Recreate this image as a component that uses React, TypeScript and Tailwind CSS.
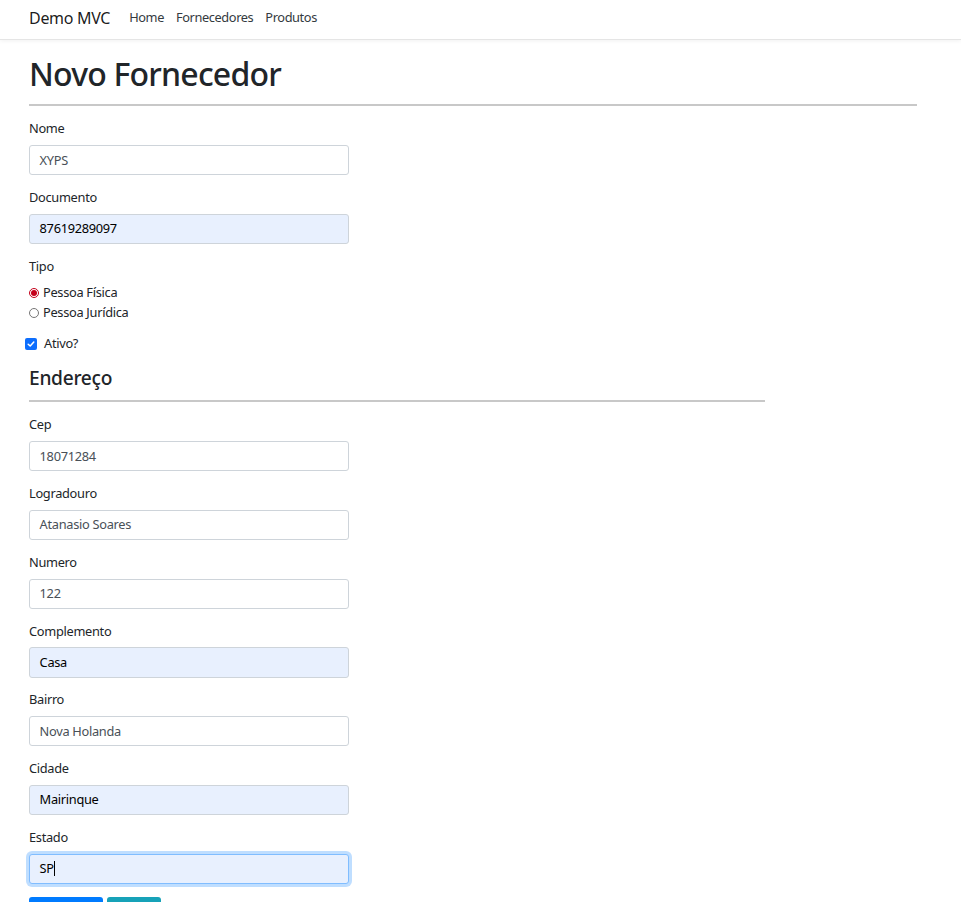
import React from 'react';

const font = { fontFamily: '"Noto Sans", "Open Sans", sans-serif' };

type Field = { label: string; value: string; autofill?: boolean; focused?: boolean };

const top: Field[] = [
  { label: 'Nome', value: 'XYPS' },
  { label: 'Documento', value: '87619289097', autofill: true },
];

const endereco: Field[] = [
  { label: 'Cep', value: '18071284' },
  { label: 'Logradouro', value: 'Atanasio Soares' },
  { label: 'Numero', value: '122' },
  { label: 'Complemento', value: 'Casa', autofill: true },
  { label: 'Bairro', value: 'Nova Holanda' },
  { label: 'Cidade', value: 'Mairinque', autofill: true },
  { label: 'Estado', value: 'SP', autofill: true, focused: true },
];

const FormGroup: React.FC<{ f: Field }> = ({ f }) => (
  <div className="mb-[12.8px]">
    <label className="block text-[12.8px] leading-[19.2px] mb-[6.4px] text-[#212529] tracking-[-0.3px]">{f.label}</label>
    <div
      className={
        'w-[320px] h-[30.4px] rounded-[3px] border px-[9.6px] flex items-center text-[12.8px] tracking-[-0.3px] ' +
        (f.autofill ? 'bg-[#e8f0fe] text-black ' : 'bg-white text-[#495057] ') +
        (f.focused ? 'border-[#80bdff] shadow-[0_0_0_3px_rgba(0,123,255,0.25)]' : 'border-[#ced4da]')
      }
    >
      {f.value}
      {f.focused && <span className="w-px h-[15px] bg-black" />}
    </div>
  </div>
);

export default function App() {
  return (
    <div className="min-h-screen bg-white text-[#212529] overflow-hidden" style={font}>
      {/* Navbar */}
      <nav className="h-[40px] pb-[4px] border-b border-[#e5e5e5] shadow-[0_1px_4px_rgba(0,0,0,0.06)] flex items-center px-[29px]">
        <span className="text-[16px] text-black/90 mr-[19px] tracking-[-0.3px]">Demo MVC</span>
        <div className="flex gap-[12px] text-[12.8px] text-[#343a40] tracking-[-0.4px]">
          <span>Home</span>
          <span>Fornecedores</span>
          <span>Produtos</span>
        </div>
      </nav>

      <main className="px-[29px]">
        <h1 className="text-[32px] leading-[38.4px] font-medium mt-[15px] tracking-[-0.8px]">Novo Fornecedor</h1>
        <hr className="w-[888px] border-0 border-t-2 border-[#c8c8c8] mt-[11px] mb-[13px]" />

        {top.map((f) => (
          <FormGroup key={f.label} f={f} />
        ))}

        <div className="mb-[12.8px] text-[12.8px] tracking-[-0.3px]">
          <label className="block leading-[19.2px] mb-[6.4px]">Tipo</label>
          <div className="flex items-center h-[20px] gap-[4px]">
            <span className="w-[10px] h-[10px] rounded-full border border-[#c4001a] flex items-center justify-center">
              <span className="w-[6px] h-[6px] rounded-full bg-[#c4001a]" />
            </span>
            Pessoa Física
          </div>
          <div className="flex items-center h-[20px] gap-[4px]">
            <span className="w-[10px] h-[10px] rounded-full border border-[#767676]" />
            Pessoa Jurídica
          </div>
        </div>

        <div className="flex items-center h-[17px] -ml-[4px] gap-[7px] text-[12.8px] tracking-[-0.3px]">
          <span className="w-[12px] h-[12px] rounded-[2px] bg-[#0d6efd] flex items-center justify-center">
            <svg width="8" height="8" viewBox="0 0 8 8" fill="none">
              <path d="M1.2 4.2 L3.2 6 L6.8 2" stroke="white" strokeWidth="1.5" strokeLinecap="round" strokeLinejoin="round" />
            </svg>
          </span>
          Ativo?
        </div>

        <h4 className="text-[19.2px] leading-[23px] font-medium mt-[14px] tracking-[-0.3px]">Endereço</h4>
        <hr className="w-[736px] border-0 border-t-2 border-[#c8c8c8] mt-[11px] mb-[13px]" />

        {endereco.map((f) => (
          <FormGroup key={f.label} f={f} />
        ))}

        <div className="flex gap-[4px]">
          <button aria-label="Salvar" className="w-[74px] h-[30.4px] rounded-[3px] bg-[#007bff]" />
          <button aria-label="Voltar" className="w-[54px] h-[30.4px] rounded-[3px] bg-[#17a2b8]" />
        </div>
      </main>
    </div>
  );
}
